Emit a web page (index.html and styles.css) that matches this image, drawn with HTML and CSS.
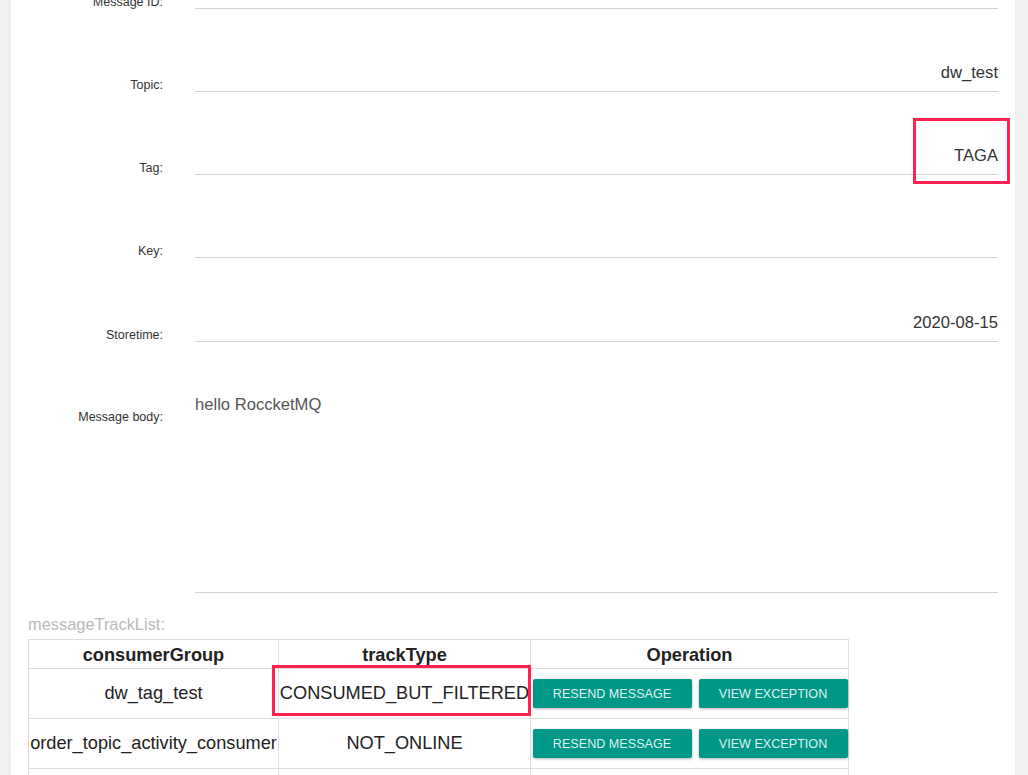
FILE: index.html
```html
<!DOCTYPE html>
<html>
<head>
<meta charset="utf-8">
<link rel="stylesheet" href="styles.css">
</head>
<body>
<div class="panel">
  <div class="row">
    <div class="label">Message ID:</div>
    <div class="field"></div>
  </div>
  <div class="row">
    <div class="label">Topic:</div>
    <div class="field">dw_test</div>
  </div>
  <div class="row">
    <div class="label">Tag:</div>
    <div class="field">TAGA<span class="mark mark-tag"></span></div>
  </div>
  <div class="row">
    <div class="label">Key:</div>
    <div class="field"></div>
  </div>
  <div class="row row-tall">
    <div class="label">Storetime:</div>
    <div class="field">2020-08-15</div>
  </div>
  <div class="row row-body">
    <div class="label">Message body:</div>
    <div class="field field-body">hello RoccketMQ</div>
  </div>

  <div class="track-title">messageTrackList:</div>
  <table class="track">
    <colgroup>
      <col class="c1"><col class="c2"><col class="c3">
    </colgroup>
    <thead>
      <tr><th>consumerGroup</th><th>trackType</th><th>Operation</th></tr>
    </thead>
    <tbody>
      <tr>
        <td>dw_tag_test</td>
        <td class="marked">CONSUMED_BUT_FILTERED<span class="mark mark-cell"></span></td>
        <td class="ops"><button class="btn btn-resend">RESEND MESSAGE</button><button class="btn btn-view">VIEW EXCEPTION</button></td>
      </tr>
      <tr>
        <td>order_topic_activity_consumer</td>
        <td>NOT_ONLINE</td>
        <td class="ops"><button class="btn btn-resend">RESEND MESSAGE</button><button class="btn btn-view">VIEW EXCEPTION</button></td>
      </tr>
      <tr>
        <td></td>
        <td></td>
        <td class="ops"></td>
      </tr>
    </tbody>
  </table>
</div>
</body>
</html>
```

FILE: styles.css
```css
html, body {
  margin: 0;
  padding: 0;
  background: #f0f0f0;
  font-family: "Liberation Sans", Arial, Helvetica, sans-serif;
  overflow: hidden;
}

.panel {
  background: #ffffff;
  margin: -74px 13px 0 11px;
  padding: 0 17px 40px 17px;
}

.row {
  display: flex;
  align-items: flex-end;
  height: 83px;
}

.row-tall {
  height: 84px;
}

.label {
  width: 135px;
  flex: none;
  text-align: right;
  font-size: 12.5px;
  line-height: 14px;
  color: #333;
  margin-bottom: 0;
  margin-right: 32px;
}

.field {
  position: relative;
  flex: 1;
  border-bottom: 1px solid #d2d2d2;
  text-align: right;
  font-size: 16.6px;
  line-height: 20px;
  color: #333;
  padding-bottom: 8px;
  min-height: 20px;
}

.row-body {
  height: 251px;
  align-items: flex-start;
}

.row-body .label {
  margin-top: 68px;
}

.field-body {
  align-self: stretch;
  text-align: left;
  color: #555;
  padding-top: 53px;
  padding-bottom: 0;
}

.mark {
  position: absolute;
  border: 3px solid #ff2152;
  box-sizing: border-box;
  pointer-events: none;
}

.mark-tag {
  right: -12px;
  bottom: -10px;
  width: 97px;
  height: 66px;
}

.track-title {
  margin-top: 21px;
  font-size: 16.4px;
  line-height: 20px;
  color: #bbbbbb;
  height: 25px;
}

.track {
  border-collapse: collapse;
  table-layout: fixed;
  width: 820px;
  font-size: 18.2px;
  color: #222;
}

.c1 { width: 250px; }
.c2 { width: 252px; }
.c3 { width: 318px; }

.track th,
.track td {
  border: 1px solid #dddddd;
  text-align: center;
  padding: 0;
  white-space: nowrap;
  overflow: visible;
}

.track th {
  height: 27px;
  font-weight: bold;
  line-height: 26px;
  padding-top: 1px;
}

.track td {
  height: 49px;
}

.marked {
  position: relative;
}

.mark-cell {
  left: -7px;
  top: -4px;
  right: -1px;
  bottom: 2px;
}

.ops {
  text-align: left;
}

.btn {
  height: 29px;
  border: none;
  border-radius: 2px;
  background: #009688;
  color: #dff3f1;
  font-family: "Liberation Sans", Arial, Helvetica, sans-serif;
  font-size: 12.6px;
  padding: 0;
  vertical-align: middle;
  box-shadow: 0 1px 3px rgba(0, 0, 0, 0.3);
}

.btn-resend {
  width: 159px;
  margin-left: 1px;
}

.btn-view {
  width: 149px;
  margin-left: 7px;
}
```
